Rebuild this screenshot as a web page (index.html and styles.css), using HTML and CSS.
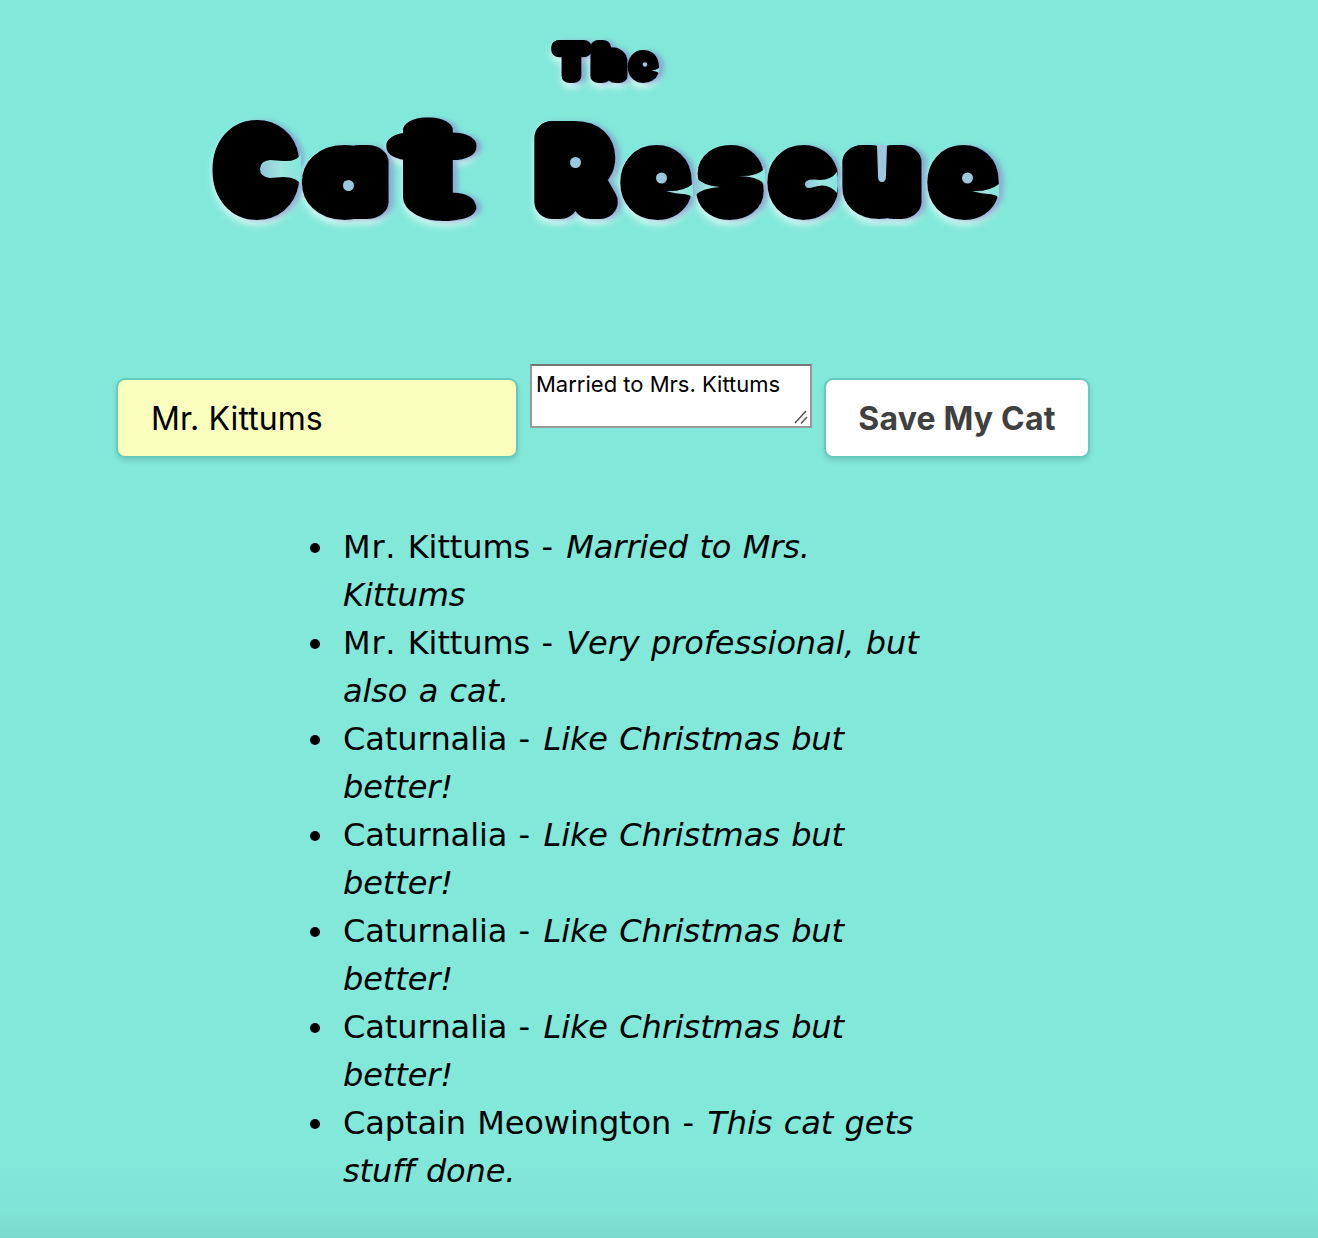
FILE: index.html
```
<!DOCTYPE html>
<html lang="en">
<head>
<meta charset="utf-8">
<title>The Cat Rescue</title>
<link rel="stylesheet" href="styles.css">
</head>
<body>
<main class="page">
  <h1 class="title">
    <svg class="logo" width="840" height="220" viewBox="190 20 840 220">
      <defs>
        <filter id="glow" x="-5%" y="-10%" width="110%" height="125%">
          <feDropShadow in="SourceGraphic" dx="0" dy="5" stdDeviation="3.5" flood-color="#fff" flood-opacity=".7" result="w"/>
          <feDropShadow in="SourceGraphic" dx="5" dy="1" stdDeviation="2.5" flood-color="#7694cd" flood-opacity=".75" result="b"/>
          <feMerge><feMergeNode in="w"/><feMergeNode in="b"/></feMerge>
        </filter>
        <linearGradient id="mouth"><stop offset="0" stop-color="#8fc4d9"/><stop offset=".5" stop-color="#9fe6e0"/><stop offset="1" stop-color="#82e8da"/></linearGradient>
      </defs>
      <g filter="url(#glow)">
        <text class="small-word" y="75.500"><tspan x="557" textLength="29" lengthAdjust="spacingAndGlyphs">T</tspan><tspan x="595" textLength="28" lengthAdjust="spacingAndGlyphs">h</tspan><tspan class="low" x="633" textLength="20.500" lengthAdjust="spacingAndGlyphs">e</tspan></text>
        <text class="big-word" y="202"><tspan class="cap" x="224" textLength="63" lengthAdjust="spacingAndGlyphs">C</tspan><tspan x="318.500" textLength="56" lengthAdjust="spacingAndGlyphs">a</tspan><tspan class="tee" x="408" y="208" textLength="50" lengthAdjust="spacingAndGlyphs">t</tspan><tspan> </tspan><tspan class="cap" x="544" y="202" textLength="59" lengthAdjust="spacingAndGlyphs">R</tspan><tspan x="634" textLength="44" lengthAdjust="spacingAndGlyphs">e</tspan><tspan x="710" textLength="40" lengthAdjust="spacingAndGlyphs">s</tspan><tspan x="781" textLength="43" lengthAdjust="spacingAndGlyphs">c</tspan><tspan x="856" textLength="52" lengthAdjust="spacingAndGlyphs">u</tspan><tspan x="941" textLength="44" lengthAdjust="spacingAndGlyphs">e</tspan></text>
        <path d="M250 152h34v36h-34z"/>
      </g>
      <g class="holes">
        <circle cx="348.500" cy="185.500" r="5.500"/><circle cx="575.500" cy="162.500" r="5.500"/>
        <circle cx="661.500" cy="178" r="5.500"/><circle cx="967.500" cy="178" r="5.500"/><circle cx="645" cy="64.500" r="2.300"/>
        <path d="M877 145h10l-1 31q0 6-4 6t-4-6z"/>
      </g>
      <g fill="url(#mouth)">
        <path d="M301 154q-4 8-18 7l-13-1q-10 1-10 9t10 9l13-1q14 0 18 8z"/>
        <path d="M837 172q-6 8-17 8-15-2-15 4t9 3q14-5 23 6z"/>
        <path d="M693 184q-10 8-27 7 10 3 18 3 7 1 9 4z"/>
        <path d="M999 184q-10 8-27 7 10 3 18 3 7 1 9 4z"/>
        <path d="M765 168q-7 9-27 8 18 0 27 8z"/>
        <path d="M694 176q9 10 26 11-18 1-26 9z"/>
        <path d="M659 68q-4 3-10 2 7 1 10 3z"/>
      </g>
    </svg>
  </h1>
  <form class="form">
    <input class="name" type="text" value="Mr. Kittums">
    <div class="note">Married to Mrs. Kittums
      <svg class="grip" width="16" height="16" viewBox="0 0 16 16"><path d="M2 14 13 2M8 14.500 14 8"/></svg>
    </div>
    <button class="save" type="button">Save My Cat</button>
  </form>
  <ul class="cats">
    <li><span class="prefix">Mr.</span> Kittums - <em>Married to Mrs. Kittums</em></li>
    <li><span class="prefix">Mr.</span> Kittums - <em>Very professional, but also a cat.</em></li>
    <li>Caturnalia - <em>Like Christmas but better!</em></li>
    <li>Caturnalia - <em>Like Christmas but better!</em></li>
    <li>Caturnalia - <em>Like Christmas but better!</em></li>
    <li>Caturnalia - <em>Like Christmas but better!</em></li>
    <li>Captain Meowington - <em>This cat gets stuff done.</em></li>
  </ul>
</main>
</body>
</html>
```
FILE: styles.css
```
* { box-sizing: border-box; }
body { margin: 0; background: #82e8da; }
.page {
  height: 1238px;
  overflow: hidden;
  padding-top: 20px;
  background: linear-gradient(#82e8da 0, #82e8da 1160px, #80e4d7 1210px, #79dacd 1238px);
}
.title { margin: 0 0 0 190px; height: 220px; }
.logo { display: block; overflow: visible; }
.logo text {
  font-family: Inter, sans-serif;
  font-weight: 400;
  font-feature-settings: "cv11";
  fill: #000;
  stroke: #000;
  stroke-linejoin: round;
}
.small-word { font-size: 40px; stroke-width: 14px; }
.small-word .low { font-size: 34px; }
.big-word { font-size: 73px; stroke-width: 34px; }
.big-word .cap { font-size: 88px; }
.big-word .tee { font-size: 115px; font-weight: 100; stroke-width: 25px; }
.holes { fill: #9bc8dc; }
.form {
  display: flex;
  margin: 124px 0 0 116px;
  font-family: Inter, sans-serif;
}
.name, .save {
  height: 80px;
  margin-top: 14px;
  border: 2px solid #65cbbd;
  border-radius: 9px;
  box-shadow: 0 3px 5px rgba(0, 0, 0, .12);
  font: 32px Inter, sans-serif;
}
.name { width: 402px; padding: 0 33px; background: #faffbd; color: #000; letter-spacing: .08px; }
.note {
  position: relative;
  width: 282px;
  height: 64px;
  margin: 0 12px;
  padding: 5px 4px;
  border: 2px solid #999;
  border-top-color: #757575;
  background: #fff;
  font-size: 22px;
  line-height: 27px;
  white-space: nowrap;
}
.grip { position: absolute; right: 1px; bottom: 1px; fill: none; stroke: #555; stroke-width: 1.5; }
.save { width: 266px; padding: 0; background: #fff; color: #404040; font-weight: 700; letter-spacing: .2px; }
.cats {
  width: 590px;
  margin: 65px 0 0 343px;
  padding: 0;
  list-style: none;
  font: 32px/48px "DejaVu Sans", sans-serif;
  font-kerning: none;
  font-variant-ligatures: none;
  letter-spacing: -.1px;
  word-spacing: 1.3px;
}
.cats em { margin-left: 2px; }
.cats li::before {
  content: "";
  display: inline-block;
  width: 10px;
  height: 10px;
  margin: 0 23px 5px -33px;
  border-radius: 50%;
  background: #000;
}
.prefix { letter-spacing: .8px; }
```
